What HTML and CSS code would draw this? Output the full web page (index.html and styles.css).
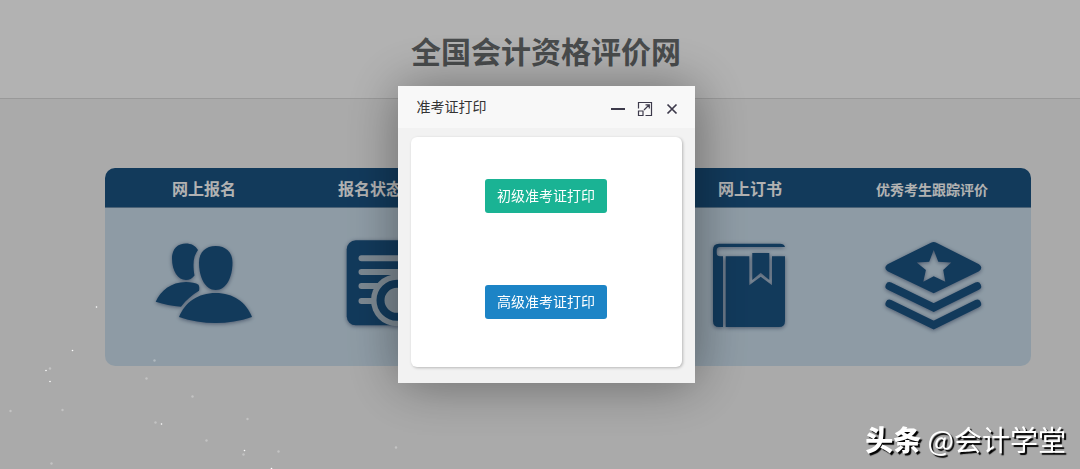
FILE: index.html
```html
<!DOCTYPE html>
<html lang="zh-CN">
<head>
<meta charset="utf-8">
<title>全国会计资格评价网</title>
<link rel="stylesheet" href="styles.css">
</head>
<body>
<header class="site-header"><h1>全国会计资格评价网</h1></header>
<main class="services">
  <section class="service">
    <h2><a href="#">网上报名</a></h2>
    <svg class="icon" viewBox="0 0 108 100" aria-hidden="true">
      <path d="M36 7.500c5 0 9.300 2 12 6.500-4.500 6-5.500 13-3.500 25.500-2.500 3-5 4.500-8.500 4.500-8 0-14-9-14-21.500 0-10 6-15 14-15z"/>
      <path d="M5.700 65.700c5-11 15-19.500 30.300-19.700 5 0 10 1 12.500 2.700 1 2 1 4 .5 6-7 4-12.500 9-18 16-9-.7-17-2.200-25.300-5z"/>
      <path d="M65.700 10c10 0 16.800 6 16.800 16.500C82.500 41 76.500 54 65.700 54S49 41 49 26.500C49 16 55.700 10 65.700 10z"/>
      <path d="M29 81c6-15 19-24 36.700-24S96 66 102 81c-24 8-49 8-73 0z"/>
    </svg>
  </section>
  <section class="service">
    <h2><a href="#">报名状态查询</a></h2>
    <svg class="icon" viewBox="0 0 108 100" aria-hidden="true">
      <rect x="14.700" y="4.300" width="77" height="85" rx="9"/>
      <path class="cut-line" d="M29.500 22.300H78M29.500 36H78M29.500 50H60M29.500 65H60"/>
      <circle class="cut" cx="65" cy="64.300" r="26"/>
      <circle class="ring" cx="65" cy="64.300" r="16.500"/>
    </svg>
  </section>
  <section class="service"><h2></h2></section>
  <section class="service">
    <h2><a href="#">网上订书</a></h2>
    <svg class="icon" viewBox="0 0 108 100" aria-hidden="true">
      <path fill-rule="evenodd" d="M23 7.700h61q4 0 5 3.300H24q-3.300 0-3.300 3.500v2.500q0 3.300 3.300 3.300h3V91h-4q-6 0-6-6V13.700q0-6 6-6z"/>
      <path d="M29.700 20.300h23.600v29L64.700 40.700 76 49.300v-29h13V85q0 6-6 6H29.700z"/>
      <path d="M56.300 17h17v27l-8.600-7.300-8.400 7.300z"/>
    </svg>
  </section>
  <section class="service">
    <h2 class="long"><a href="#">优秀考生跟踪评价</a></h2>
    <svg class="icon" viewBox="0 0 108 100" aria-hidden="true">
      <path fill-rule="evenodd" d="M53 6.700q2.700-1.400 5.400 0L101 28.200q4.600 3.500 0 7L55.700 57.300 9.600 35.200q-4.600-3.500 0-7zM55.700 14l-4.500 11.700-12.500.8 9.200 7.500-2.600 11.700 10.400-5.400 11.600 5.400L65.200 34l8.100-7.500-13-.8z"/>
      <path class="chevron" d="M11.500 50.200l44.200 21.300 43.400-21.300M11.500 67.700l44.200 21.300 43.400-21.300"/>
    </svg>
  </section>
</main>
<svg class="snow" aria-hidden="true">
  <g class="bright"><circle cx="96.500" cy="307" r=".8"/><circle cx="72.500" cy="350.500" r=".8"/><circle cx="46" cy="370.500" r=".8"/><circle cx="50" cy="381.500" r=".8"/><circle cx="161.500" cy="424" r=".8"/><circle cx="244.500" cy="450.500" r=".8"/><circle cx="271.500" cy="468.500" r=".8"/></g>
  <g class="faint"><circle cx="50" cy="368.500" r="1.200"/><circle cx="154.500" cy="360.500" r="1.200"/><circle cx="146.500" cy="378.500" r="1.200"/><circle cx="192.500" cy="396.500" r="1.200"/><circle cx="10.500" cy="411" r="1.200"/><circle cx="62.500" cy="410" r="1.200"/><circle cx="155.500" cy="422.500" r="1.200"/><circle cx="247.500" cy="419" r="1.200"/><circle cx="206.500" cy="440.500" r="1.200"/><circle cx="243.500" cy="454.500" r="1.200"/><circle cx="278.500" cy="451.500" r="1.200"/><circle cx="396" cy="447.500" r="1.200"/><circle cx="51.500" cy="463.500" r="1.200"/></g>
</svg>
<div class="overlay">
  <div class="dialog" role="dialog" aria-labelledby="dialog-title">
    <div class="dialog-bar">
      <h2 id="dialog-title">准考证打印</h2>
      <button type="button" aria-label="最小化"><svg width="16" height="16" viewBox="0 0 16 16"><path stroke-width="2" d="M1 8h14"/></svg></button>
      <button type="button" aria-label="最大化"><svg width="16" height="16" viewBox="0 0 16 16"><path stroke-width="1.200" d="M1.500 7.500v-6h13v13h-6M1.500 10h4.500v4.500H1.500zM7 9l5-5M8.500 3.800h3.800v3.800"/></svg></button>
      <button type="button" aria-label="关闭"><svg width="16" height="16" viewBox="0 0 16 16"><path stroke-width="1.700" d="M3.500 3.500l9 9M12.500 3.500l-9 9"/></svg></button>
    </div>
    <div class="card">
      <button type="button" class="btn green">初级准考证打印</button>
      <button type="button" class="btn blue">高级准考证打印</button>
    </div>
  </div>
</div>
<div class="watermark"><b>头条</b> @会计学堂</div>
</body>
</html>
```
FILE: styles.css
```css
* { box-sizing: border-box; }

body {
  margin: 0;
  min-height: 100vh;
  overflow: hidden;
  background: #f4f4f4;
  font-family: "Liberation Sans", "Noto Sans CJK SC", sans-serif;
  font-size: 14px;
}

h1, h2 { margin: 0; }

.site-header {
  padding: 31px 0 23px 12px;
  background: #fff;
  border-bottom: 1px solid #dcdcdc;
  text-align: center;
}

.site-header h1 {
  color: #696d6e;
  font-size: 30px;
  line-height: 44px;
}

.services {
  display: grid;
  grid-template-columns: repeat(5, 1fr);
  margin: 69px 49px 0 105px;
  padding: 0 8px;
  border-radius: 10px;
  background: linear-gradient(#1a5383 39px, #6d8fab 39px, #6d8fab 40px, #ccdfed 40px);
}

.service { text-align: center; }

.service h2 {
  height: 40px;
  font-size: 16px;
  line-height: 44px;
}

.service h2.long { font-size: 14px; }

.service a {
  color: #fff;
  text-decoration: none;
  white-space: nowrap;
}

.icon {
  display: block;
  width: 108px;
  height: 100px;
  margin: 28px auto 30px;
  fill: #1a5383;
  filter: drop-shadow(0 1px 2px rgba(40, 60, 100, .6));
}

.icon .cut { fill: #b3c4d1; }
.icon .cut-line { fill: none; stroke: #b3c4d1; stroke-width: 6; stroke-linecap: round; }
.icon .ring { fill: none; stroke: #1a5383; stroke-width: 8; }
.icon .chevron { fill: none; stroke: #1a5383; stroke-width: 8; stroke-linecap: round; }

.overlay {
  position: fixed;
  inset: 0;
  display: flex;
  align-items: center;
  justify-content: center;
  padding-left: 12px;
  background: rgba(0, 0, 0, .3);
}

.dialog {
  width: 297px;
  padding-bottom: 16px;
  background: #f2f2f2;
  box-shadow: 1px 1px 50px rgba(0, 0, 0, .4);
}

.dialog-bar {
  display: flex;
  align-items: center;
  gap: 11px;
  height: 42px;
  padding: 0 15px 0 19px;
  background: #f8f8f8;
}

.dialog-bar h2 {
  flex: 1;
  padding-bottom: 2px;
  color: #333;
  font-size: 14px;
  font-weight: 400;
}

.dialog-bar button {
  display: flex;
  margin-top: 4px;
  padding: 0;
  border: 0;
  background: none;
  cursor: pointer;
}

.dialog-bar svg { fill: none; stroke: #3d3a4b; }

.card {
  display: flex;
  flex-direction: column;
  align-items: center;
  gap: 72px;
  margin: 9px 13px 0;
  padding: 42px 0 48px;
  border-radius: 6px;
  background: #fff;
  box-shadow: 1px 1px 3px rgba(0, 0, 0, .25);
}

.btn {
  height: 34px;
  padding: 0 12px 2px;
  border: 0;
  border-radius: 3px;
  color: #fff;
  font: inherit;
  cursor: pointer;
}

.green { background: #1ab394; }
.blue { background: #1c84c6; }

.snow {
  position: fixed;
  inset: 0;
  width: 100%;
  height: 100%;
  z-index: 1;
  pointer-events: none;
}

.bright { fill: #fff; }
.faint { fill: #fff; opacity: .3; }

.watermark {
  position: fixed;
  right: 14px;
  bottom: 10px;
  z-index: 2;
  color: #fff;
  font-family: "Noto Sans CJK SC", sans-serif;
  font-size: 28px;
  line-height: 40px;
  text-shadow: 2px 2px 1px #000;
}

.watermark b { font-weight: 900; }
```
